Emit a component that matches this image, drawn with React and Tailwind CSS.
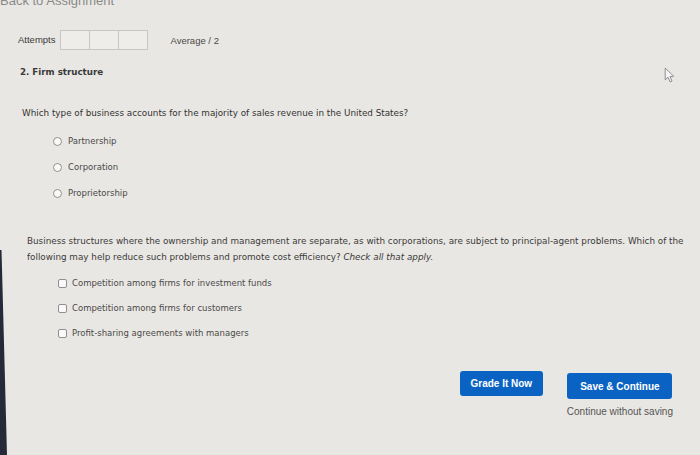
import React from 'react';

const verdana = { fontFamily: '"DejaVu Sans", Verdana, sans-serif' };
const arial = { fontFamily: '"Liberation Sans", Arial, sans-serif' };

function Radio({ label }) {
  return (
    <div className="flex items-center h-[14px] pl-[53px]">
      <span className="w-[9px] h-[9px] rounded-full border border-[#8f8f8f] bg-[#fafafa]" />
      <span className="ml-[6px] text-[8.5px] text-[#4a4a4a]">{label}</span>
    </div>
  );
}

function Check({ label }) {
  return (
    <div className="flex items-center h-[14px] pl-[58px]">
      <span className="w-[9px] h-[9px] rounded-[2px] border border-[#8f8f8f] bg-[#fafafa]" />
      <span className="ml-[5px] text-[8.5px] text-[#4a4a4a]">{label}</span>
    </div>
  );
}

export default function App() {
  return (
    <div className="relative w-[700px] h-[455px] overflow-hidden bg-[#e9e7e3] text-[#333]" style={verdana}>
      {/* cut-off link at the top */}
      <div className="h-[9px] overflow-hidden">
        <div className="-mt-[6px] text-[13px] leading-[14px] text-[#8a8a8a]" style={arial}>
          Back to Assignment
        </div>
      </div>

      {/* attempts row */}
      <div className="mt-[21px] flex items-center h-[20px] pl-[18px]" style={arial}>
        <span className="text-[9.5px] text-[#3a3a3a]">Attempts</span>
        <div className="ml-[4px] flex">
          <div className="w-[30px] h-[20px] border border-[#c6c6c6] bg-[#eeede9]" />
          <div className="w-[29px] h-[20px] border border-l-0 border-[#c6c6c6] bg-[#eeede9]" />
          <div className="w-[29px] h-[20px] border border-l-0 border-[#c6c6c6] bg-[#eeede9]" />
        </div>
        <span className="ml-[23px] mt-[2px] text-[9.5px] text-[#4a4a4a]">Average / 2</span>
      </div>

      {/* question title */}
      <div className="mt-[16px] flex items-center justify-between h-[14px] pl-[20px] pr-[24px]">
        <span className="text-[8.7px] font-bold text-[#3a3a3a]">2. Firm structure</span>
        <svg width="12" height="16" viewBox="0 0 11 15" className="mt-[3px]">
          <path d="M1 1 L1 12 L3.6 9.6 L5.6 14 L7.4 13.2 L5.5 8.9 L9 8.7 Z" fill="#f5f5f5" stroke="#8a8a8a" strokeWidth="0.9" strokeLinejoin="round" />
        </svg>
      </div>

      {/* question 1 */}
      <div className="mt-[27px] h-[12px] leading-[12px] pl-[22px] text-[8.8px] text-[#333]">
        Which type of business accounts for the majority of sales revenue in the United States?
      </div>
      <div className="mt-[15px] flex flex-col gap-[12px]">
        <Radio label="Partnership" />
        <Radio label="Corporation" />
        <Radio label="Proprietorship" />
      </div>

      {/* question 2 */}
      <div className="mt-[33px] pl-[27px] pr-[6px] text-[8.8px] leading-[16px] text-[#3a3a3a] whitespace-nowrap">
        Business structures where the ownership and management are separate, as with corporations, are subject to principal-agent problems. Which of the
        <br />
        following may help reduce such problems and promote cost efficiency? <em>Check all that apply.</em>
      </div>
      <div className="mt-[11px] flex flex-col gap-[11px]">
        <Check label="Competition among firms for investment funds" />
        <Check label="Competition among firms for customers" />
        <Check label="Profit-sharing agreements with managers" />
      </div>

      {/* actions */}
      <div className="mt-[31px] flex justify-end pr-[27px] gap-[24px]" style={arial}>
        <button className="w-[83px] h-[25px] rounded-[3px] bg-[#0a63c3] text-white text-[10px] font-bold">
          Grade It Now
        </button>
        <div className="mt-[2px] flex flex-col items-center">
          <button className="w-[105px] h-[26px] rounded-[3px] bg-[#0a63c3] text-white text-[10px] font-bold">
            Save &amp; Continue
          </button>
          <span className="mt-[5px] text-[10px] text-[#555]">Continue without saving</span>
        </div>
      </div>

      {/* dark edge of the monitor, lower left */}
      <svg className="absolute left-0 top-[250px]" width="10" height="205" viewBox="0 0 10 205">
        <polygon points="0,0 1.5,0 7,205 0,205" fill="#262a38" />
      </svg>
    </div>
  );
}
